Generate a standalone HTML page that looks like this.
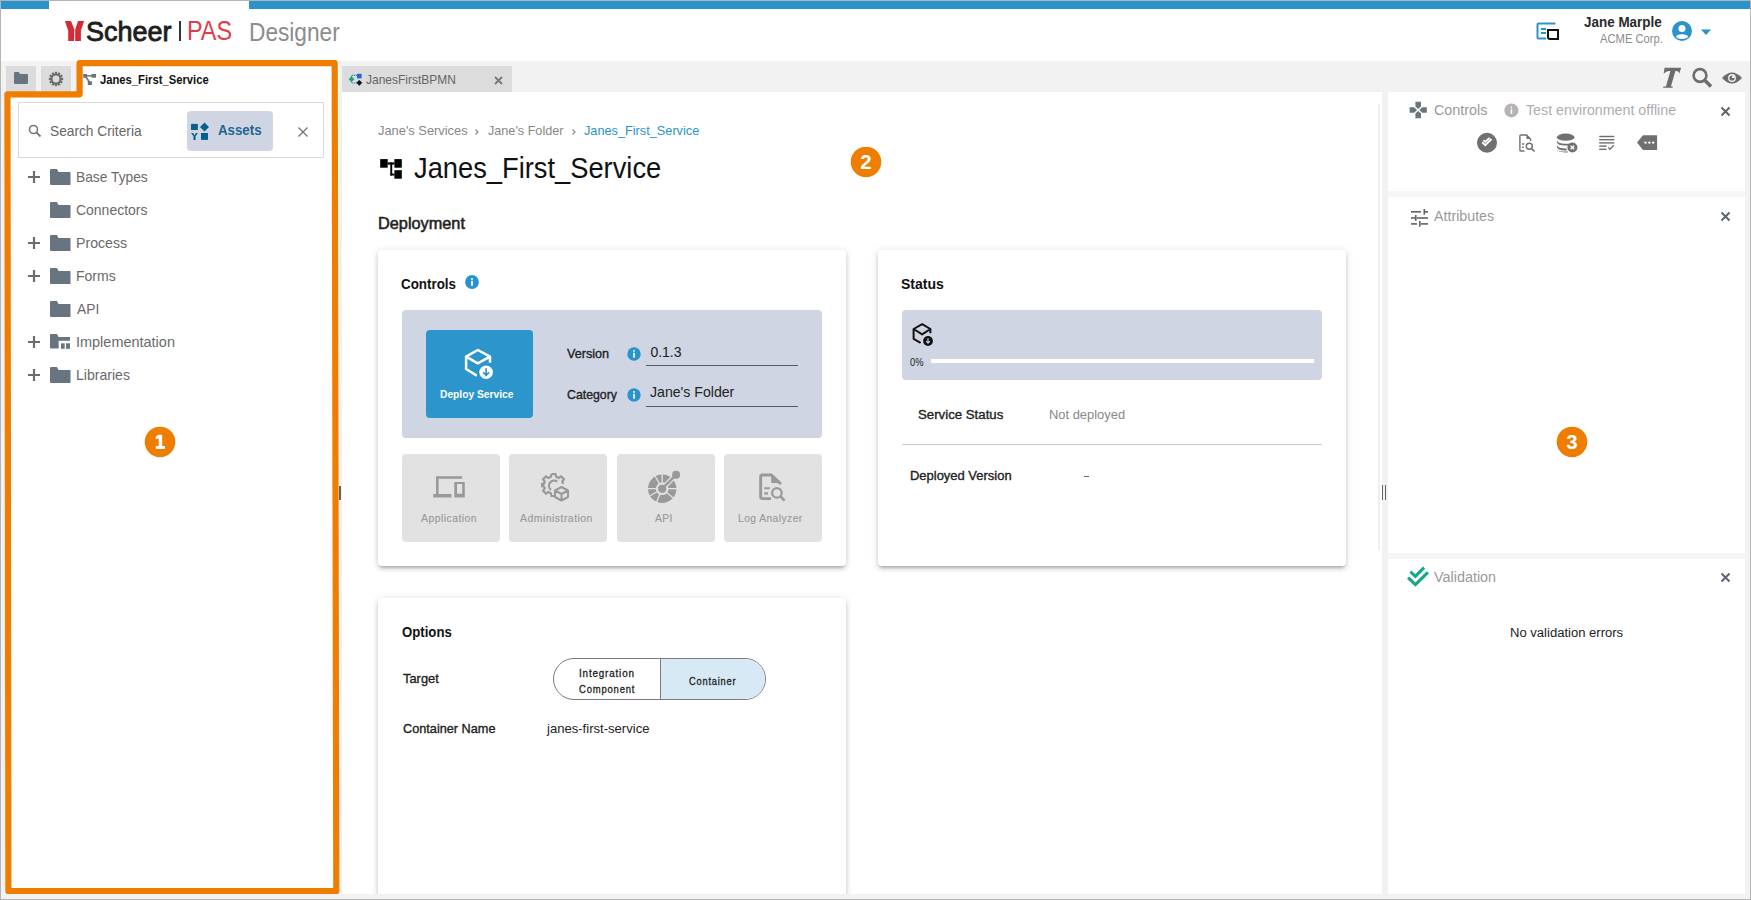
<!DOCTYPE html>
<html><head><meta charset="utf-8">
<style>
*{box-sizing:border-box;margin:0;padding:0}
html,body{width:1751px;height:900px;overflow:hidden;background:#fff;font-family:"Liberation Sans",sans-serif;color:#222}
.a{position:absolute}
.t{position:absolute;white-space:nowrap;line-height:1}
.card{background:#fff;border-radius:4px;box-shadow:0 3px 3px -2px rgba(0,0,0,.2),0 3px 4px 0 rgba(0,0,0,.14),0 1px 8px 0 rgba(0,0,0,.12)}
.tile{background:#e2e2e2;border-radius:4px}
</style></head><body>
<!-- tab bar -->
<div class="a" style="left:1px;top:61px;width:1749px;height:31px;background:#f2f2f2"></div>
<div class="a" style="left:6px;top:66px;width:30px;height:26px;background:#dcdcdc"></div>
<div class="a" style="left:41px;top:66px;width:30px;height:26px;background:#dcdcdc"></div>
<div class="a" style="left:77px;top:61px;width:262px;height:31px;background:#fff"></div>
<div class="a" style="left:342px;top:66px;width:170px;height:26px;background:#dcdcdc"></div>

<!-- splitters -->
<div class="a" style="left:1px;top:92px;width:4px;height:802px;background:#f1f2f3"></div>
<div class="a" style="left:339px;top:92px;width:3px;height:802px;background:#f0f1f3"></div>
<div class="a" style="left:1382px;top:92px;width:6px;height:802px;background:#f2f2f2"></div>
<div class="a" style="left:1745px;top:92px;width:5px;height:802px;background:#f2f2f2"></div>


<!-- header logo -->
<svg class="a" style="left:60px;top:15px" width="30" height="30" viewBox="0 0 30 30">
<path fill="#d52b35" d="M4.9 6 L11 6 L14.4 14.4 L14.1 25.9 L8.2 25.9 L8.2 15.8 Z M18 6 L24.1 6 L20.9 15.8 L20.9 25.9 L15.2 25.9 L15.2 14.4 Z"/>
</svg>
<div class="a" style="left:178.7px;top:21px;width:2px;height:20px;background:#333"></div>

<!-- header right -->
<svg class="a" style="left:1536px;top:22px" width="25" height="20" viewBox="0 0 25 20">
<path d="M19.5 1.5 H2.5 Q1.5 1.5 1.5 2.5 V15.5 Q1.5 16.5 2.5 16.5 H10" fill="none" stroke="#2a93cb" stroke-width="2"/>
<rect x="5" y="6" width="5" height="2" fill="#2a93cb"/><rect x="5" y="10" width="5" height="2" fill="#2a93cb"/>
<path d="M12 8 H22 V17 H14 Q12 17 12 15 Z" fill="none" stroke="#111" stroke-width="2"/><path d="M21 16 L23 18.5 L23 15 Z" fill="#111"/>
</svg>
<svg class="a" style="left:1671px;top:20px" width="22" height="22" viewBox="0 0 22 22">
<circle cx="11" cy="11" r="10" fill="#2a93cb"/>
<circle cx="11" cy="8.4" r="3.5" fill="#fff"/>
<ellipse cx="11" cy="16.6" rx="6" ry="2.4" fill="#fff"/>
</svg>
<svg class="a" style="left:1700px;top:28.5px" width="12" height="7" viewBox="0 0 12 7"><path d="M1 0.5 H11 L6 6 Z" fill="#2a93cb"/></svg>

<!-- tab bar content -->
<svg class="a" style="left:13px;top:71px" width="16" height="14" viewBox="0 0 16 14">
<path d="M1 2 Q1 1 2 1 H5.5 L7.5 3 H14 Q15 3 15 4 V12 Q15 13 14 13 H2 Q1 13 1 12 Z" fill="#687480"/>
</svg>
<svg class="a" style="left:48px;top:71px" width="16" height="16" viewBox="0 0 16 16">
<g fill="#6b6e6b" transform="translate(8 8)">
<circle r="5.6"/>
<rect x="-1.1" y="-7.2" width="2.2" height="14.4"/>
<rect x="-1.1" y="-7.2" width="2.2" height="14.4" transform="rotate(30)"/>
<rect x="-1.1" y="-7.2" width="2.2" height="14.4" transform="rotate(60)"/>
<rect x="-1.1" y="-7.2" width="2.2" height="14.4" transform="rotate(90)"/>
<rect x="-1.1" y="-7.2" width="2.2" height="14.4" transform="rotate(120)"/>
<rect x="-1.1" y="-7.2" width="2.2" height="14.4" transform="rotate(150)"/>
</g><circle cx="8" cy="8" r="3.4" fill="#dcdcdc"/>
</svg>
<svg class="a" style="left:82px;top:72px" width="16" height="15" viewBox="0 0 16 15">
<g fill="#687480"><rect x="1.2" y="2" width="3.7" height="3.7"/><rect x="9.5" y="2" width="4.5" height="3.7"/><rect x="5.8" y="9.3" width="4.2" height="3.7"/>
<rect x="4" y="3.1" width="6" height="1.5"/></g><path d="M3.6 4.6 L7.6 10.3" stroke="#687480" stroke-width="1.7"/></svg>
<svg class="a" style="left:348px;top:72px" width="16" height="14" viewBox="0 0 16 14">
<path d="M3.5 5 V3.4 H9 M3.5 9.5 V11 H9" fill="none" stroke="#3a7ee0" stroke-width="1.1" stroke-dasharray="1.3 0.7"/>
<path d="M0.6 7.2 L3.5 4.3 L6.4 7.2 L3.5 10.1 Z" fill="#1aa67a"/>
<rect x="9" y="1.8" width="4.6" height="4.6" fill="#2b63d9"/>
<path d="M11.3 8.2 L13.9 10.8 L11.3 13.4 L8.7 10.8 Z" fill="#111" stroke="#111" stroke-width="0.6" stroke-linejoin="round"/>
</svg>
<svg class="a" style="left:494px;top:76px" width="9" height="9" viewBox="0 0 9 9"><path d="M1 1 L8 8 M8 1 L1 8" stroke="#777" stroke-width="1.8"/></svg>

<svg class="a" style="left:1660px;top:64px" width="24" height="26" viewBox="0 0 24 26"><path d="M4.5 3.75 H21.1 L19.4 9.6 Q19 6.9 16.6 6.9 H15.4 L10.9 22.4 H12.9 L12.5 23.8 H3 L3.4 22.4 H5.9 L10.4 6.9 H9.6 Q5.8 6.9 3.7 9.9 Z" fill="#6b6e6b"/></svg>
<svg class="a" style="left:1690px;top:66px" width="24" height="24" viewBox="0 0 24 24">
<circle cx="10" cy="9.5" r="6.4" fill="none" stroke="#6b6e6b" stroke-width="2.6"/>
<path d="M14.5 14 L21 20.5" stroke="#6b6e6b" stroke-width="3.6"/>
</svg>
<svg class="a" style="left:1721px;top:71px" width="22" height="14" viewBox="0 0 22 14">
<path d="M1 7 Q11 -4 21 7 Q11 18 1 7 Z" fill="#6b6e6b"/>
<circle cx="11" cy="7" r="3.9" fill="#f2f2f2"/><circle cx="11" cy="7" r="2.6" fill="#6b6e6b"/>
<path d="M11 7 V4.4 A2.6 2.6 0 0 1 13.6 7 Z" fill="#f2f2f2"/>
</svg>


<!-- left panel -->
<div class="a" style="left:18px;top:102px;width:306px;height:56px;border:1px solid #d9d9d9;background:#fff"></div>
<svg class="a" style="left:28px;top:124px" width="14" height="14" viewBox="0 0 14 14"><circle cx="5.5" cy="5.5" r="4" fill="none" stroke="#777" stroke-width="1.6"/><path d="M8.5 8.5 L12.5 12.5" stroke="#777" stroke-width="1.8"/></svg>
<div class="a" style="left:187px;top:111px;width:86px;height:40px;background:#d0d5e3;border-radius:4px"></div>
<svg class="a" style="left:190px;top:122px" width="20" height="19" viewBox="0 0 20 19"><g fill="#075f8f">
<rect x="1" y="1.9" width="6.9" height="6.1"/><path d="M14.5 0.5 L19 5 L14.5 9.5 L10 5 Z"/><rect x="11" y="11" width="7" height="6.9"/>
<path d="M1 11 H3.2 L4.5 13.5 L5.8 11 H8 L5.6 14.2 V18 H3.5 V14.2 Z"/></g></svg>
<svg class="a" style="left:298px;top:127px" width="10" height="10" viewBox="0 0 10 10"><path d="M0.5 0.5 L9.5 9.5 M9.5 0.5 L0.5 9.5" stroke="#777" stroke-width="1.4"/></svg>
<svg class="a" style="left:28px;top:171px" width="12" height="12" viewBox="0 0 12 12"><path d="M0 6 H12 M6 0 V12" stroke="#6b6e6b" stroke-width="2.2"/></svg>
<svg class="a" style="left:50px;top:169px" width="21" height="17" viewBox="0 0 21 17"><path d="M0 1 Q0 0 1 0 H7 L8.5 3 H20 Q20.5 3 20.5 3.5 V15.5 Q20.5 16 20 16 H1 Q0 16 0 15 Z" fill="#687480"/></svg>
<svg class="a" style="left:50px;top:202px" width="21" height="17" viewBox="0 0 21 17"><path d="M0 1 Q0 0 1 0 H7 L8.5 3 H20 Q20.5 3 20.5 3.5 V15.5 Q20.5 16 20 16 H1 Q0 16 0 15 Z" fill="#687480"/></svg>
<svg class="a" style="left:28px;top:237px" width="12" height="12" viewBox="0 0 12 12"><path d="M0 6 H12 M6 0 V12" stroke="#6b6e6b" stroke-width="2.2"/></svg>
<svg class="a" style="left:50px;top:235px" width="21" height="17" viewBox="0 0 21 17"><path d="M0 1 Q0 0 1 0 H7 L8.5 3 H20 Q20.5 3 20.5 3.5 V15.5 Q20.5 16 20 16 H1 Q0 16 0 15 Z" fill="#687480"/></svg>
<svg class="a" style="left:28px;top:270px" width="12" height="12" viewBox="0 0 12 12"><path d="M0 6 H12 M6 0 V12" stroke="#6b6e6b" stroke-width="2.2"/></svg>
<svg class="a" style="left:50px;top:268px" width="21" height="17" viewBox="0 0 21 17"><path d="M0 1 Q0 0 1 0 H7 L8.5 3 H20 Q20.5 3 20.5 3.5 V15.5 Q20.5 16 20 16 H1 Q0 16 0 15 Z" fill="#687480"/></svg>
<svg class="a" style="left:50px;top:301px" width="21" height="17" viewBox="0 0 21 17"><path d="M0 1 Q0 0 1 0 H7 L8.5 3 H20 Q20.5 3 20.5 3.5 V15.5 Q20.5 16 20 16 H1 Q0 16 0 15 Z" fill="#687480"/></svg>
<svg class="a" style="left:28px;top:336px" width="12" height="12" viewBox="0 0 12 12"><path d="M0 6 H12 M6 0 V12" stroke="#6b6e6b" stroke-width="2.2"/></svg>
<svg class="a" style="left:50px;top:334px" width="21" height="17" viewBox="0 0 21 17"><path d="M0 1 Q0 0 1 0 H7 L8.5 3 H20 V6.8 H8.7 V14.4 H1 Q0 14.4 0 13.4 Z" fill="#687480"/><rect x="11" y="9.3" width="3.7" height="5.5" fill="#687480"/><rect x="16" y="9.3" width="4" height="5.5" fill="#687480"/></svg>
<svg class="a" style="left:28px;top:369px" width="12" height="12" viewBox="0 0 12 12"><path d="M0 6 H12 M6 0 V12" stroke="#6b6e6b" stroke-width="2.2"/></svg>
<svg class="a" style="left:50px;top:367px" width="21" height="17" viewBox="0 0 21 17"><path d="M0 1 Q0 0 1 0 H7 L8.5 3 H20 Q20.5 3 20.5 3.5 V15.5 Q20.5 16 20 16 H1 Q0 16 0 15 Z" fill="#687480"/></svg>
<div class="a" style="left:339px;top:486px;width:2px;height:14px;background:#5c6670"></div>

<!-- main content -->
<svg class="a" style="left:376px;top:154px" width="30" height="28" viewBox="0 0 30 28"><g fill="#000">
<rect x="4.2" y="5.1" width="7.5" height="8.6"/><rect x="18.4" y="5.1" width="7.4" height="8.6"/><rect x="18.4" y="16.2" width="7.4" height="8.5"/>
<rect x="11.7" y="8.4" width="6.7" height="2.2"/><rect x="14.3" y="8.4" width="1.9" height="13.1"/><rect x="14.3" y="19.6" width="4.1" height="1.9"/></g></svg>
<svg class="a" style="left:472px;top:127px" width="12" height="10" viewBox="0 0 12 10"><path d="M3.5 2.5 L6 5 L3.5 7.5" fill="none" stroke="#888" stroke-width="1.2"/></svg>
<svg class="a" style="left:569px;top:127px" width="12" height="10" viewBox="0 0 12 10"><path d="M3.5 2.5 L6 5 L3.5 7.5" fill="none" stroke="#888" stroke-width="1.2"/></svg>
<svg class="a" style="left:850px;top:147px" width="32" height="32" viewBox="0 0 32 32"><circle cx="16" cy="14.9" r="15.25" fill="#ee7d00"/><text x="16" y="22" text-anchor="middle" font-family="Liberation Sans" font-weight="bold" font-size="20.5" fill="#fff">2</text></svg>

<!-- cards -->
<div class="a card" style="left:378px;top:250px;width:468px;height:316px"></div>
<div class="a card" style="left:878px;top:250px;width:468px;height:316px"></div>
<div class="a card" style="left:378px;top:598px;width:468px;height:320px"></div>

<svg class="a" style="left:465px;top:275px" width="14" height="14" viewBox="0 0 14 14"><circle cx="7" cy="7" r="6.9" fill="#2a93cb"/><rect x="6.1" y="5.8" width="1.8" height="5" fill="#fff"/><circle cx="7" cy="3.9" r="1" fill="#fff"/></svg>
<div class="a" style="left:402px;top:310px;width:420px;height:128px;background:#d0d5e3;border-radius:4px"></div>
<div class="a" style="left:426px;top:330px;width:107px;height:88px;background:#2b95cc;border-radius:4px"></div>
<svg class="a" style="left:460px;top:345px" width="36" height="36" viewBox="0 0 36 36">
<path d="M16.7 30.6 L6.1 24 V11.7 L17.8 5 L30 11.7 V17.8 M6.1 11.7 L17.8 18.3 L30 11.7" fill="none" stroke="#fff" stroke-width="2.5" stroke-linejoin="round"/>
<circle cx="26.1" cy="27.2" r="7.6" fill="#2b95cc"/><circle cx="26.1" cy="27.2" r="6.8" fill="#fff"/><path d="M26.1 23.2 V30.2 M23.2 27.3 L26.1 30.3 L29 27.3" fill="none" stroke="#2b95cc" stroke-width="1.7"/>
</svg>
<svg class="a" style="left:627px;top:347px" width="14" height="14" viewBox="0 0 14 14"><circle cx="7" cy="7" r="6.7" fill="#2a93cb"/><rect x="6.15" y="5.8" width="1.7" height="4.8" fill="#fff"/><circle cx="7" cy="3.9" r="0.95" fill="#fff"/></svg>
<svg class="a" style="left:627px;top:388px" width="14" height="14" viewBox="0 0 14 14"><circle cx="7" cy="7" r="6.7" fill="#2a93cb"/><rect x="6.15" y="5.8" width="1.7" height="4.8" fill="#fff"/><circle cx="7" cy="3.9" r="0.95" fill="#fff"/></svg>
<div class="a" style="left:646px;top:365px;width:152px;height:1px;background:#5a5a5a"></div>
<div class="a" style="left:646px;top:406px;width:152px;height:1px;background:#5a5a5a"></div>

<div class="a tile" style="left:402px;top:454px;width:98px;height:88px"></div>
<div class="a tile" style="left:509px;top:454px;width:98px;height:88px"></div>
<div class="a tile" style="left:617px;top:454px;width:98px;height:88px"></div>
<div class="a tile" style="left:724px;top:454px;width:98px;height:88px"></div>
<svg class="a" style="left:432px;top:475px" width="34" height="24" viewBox="0 0 34 24"><g fill="#999">
<path d="M4.6 1.2 H30.2 V3.7 H6.6 V19 H19.5 V22.6 H1.2 V19 H4 V1.8 Z"/>
<path d="M23 6.9 H32.1 Q32.8 6.9 32.8 7.6 V21.9 Q32.8 22.6 32.1 22.6 H23 Q22.3 22.6 22.3 21.9 V7.6 Q22.3 6.9 23 6.9 Z M25 9 V18.8 H30.2 V9 Z"/></g></svg>
<svg class="a" style="left:541px;top:472px" width="30" height="30" viewBox="0 0 30 30">
<g transform="translate(12.5 13)" fill="none" stroke="#999" stroke-width="2.2">
<path d="M-2 -11 H2 L2.6 -8.2 L5.2 -7 L7.6 -8.6 L10.4 -5.8 L8.8 -3.4 L9.6 -1.2"/>
<path d="M-9.6 1.2 L-8.8 3.4 L-10.4 5.8 L-7.6 8.6 L-5.2 7 L-2.6 8.2 L-2 11 H1"/>
<path d="M-2 -11 L-2.6 -8.2 L-5.2 -7 L-7.6 -8.6 L-10.4 -5.8 L-8.8 -3.4 L-9.6 -1.2 L-12 -1.2 V1.2 L-9.6 1.2"/>
<path d="M-2.5 4.8 A5 5 0 0 1 3.8 -3.4" />
</g>
<path d="M20.5 15 L27 18.5 V25 L20.5 28.5 L14 25 V18.5 Z M14 18.5 L20.5 22 L27 18.5 M20.5 22 V28.5" fill="none" stroke="#999" stroke-width="2" stroke-linejoin="round"/>
</svg>
<svg class="a" style="left:644px;top:468px" width="40" height="38" viewBox="0 0 40 38">
<circle cx="18.2" cy="20.7" r="14.2" fill="#999"/>
<path d="M18.2 20.7 L2.20 20.70 M18.2 20.7 L34.20 20.70 M18.2 20.7 L18.20 4.70 M18.2 20.7 L10.44 6.71 M18.2 20.7 L4.40 28.80 M18.2 20.7 L11.95 35.43 M18.2 20.7 L30.46 30.98 " stroke="#e2e2e2" stroke-width="1.3" fill="none"/>
<circle cx="18.2" cy="20.7" r="5.2" fill="none" stroke="#e2e2e2" stroke-width="2.3"/>
<path d="M18.2 20.7 L32.1 6.8" stroke="#e2e2e2" stroke-width="5"/>
<path d="M18.2 20.7 L32.1 6.8" stroke="#999" stroke-width="2.4"/>
<circle cx="18.2" cy="20.7" r="4" fill="#999"/>
<circle cx="32.1" cy="6.8" r="4" fill="#999"/>
</svg>
<svg class="a" style="left:757px;top:472px" width="32" height="32" viewBox="0 0 32 32">
<path d="M14 26.65 H5.5 Q3.65 26.65 3.65 24.8 V4.9 Q3.65 3.05 5.5 3.05 H14.2 L23 11.2 V12.6" fill="none" stroke="#999" stroke-width="2.9"/>
<path d="M14.2 1.6 L23.6 10.6 L23.6 11 H14.2 Z" fill="#999"/>
<path d="M7.2 15.2 H13.2 L12.5 17.3 H7.2 Z" fill="#999"/><rect x="7.2" y="20.3" width="3.8" height="2.3" fill="#999"/>
<circle cx="19.9" cy="20.9" r="4.75" fill="none" stroke="#999" stroke-width="2.3"/><path d="M23.2 24.2 L27.6 28.6" stroke="#999" stroke-width="2.6"/>
</svg>

<!-- status card -->
<div class="a" style="left:902px;top:310px;width:420px;height:70px;background:#d0d5e3;border-radius:4px"></div>
<svg class="a" style="left:902px;top:315px" width="40" height="36" viewBox="0 0 40 36">
<path d="M18.6 27.8 L11.6 23.8 V14 L20.2 9.2 L28.4 14 V18.3 M11.6 14 L20.2 19.4 L28.4 14" fill="none" stroke="#111" stroke-width="2" stroke-linejoin="round"/>
<circle cx="26" cy="26" r="4.9" fill="#111"/><path d="M26 23.3 V28 M24.2 26.2 L26 28.1 L27.8 26.2" fill="none" stroke="#d0d5e3" stroke-width="1.1"/>
</svg>
<div class="a" style="left:931px;top:359px;width:383px;height:4px;background:#fff"></div>
<div class="a" style="left:902px;top:444px;width:420px;height:1px;background:#c8cad3"></div>
<div class="a" style="left:1084px;top:475.5px;width:5px;height:1.2px;background:#666"></div>

<!-- options -->
<div class="a" style="left:553px;top:658px;width:213px;height:42px;border:1px solid #7a7a80;border-radius:21px;overflow:hidden;background:#fff">
<div class="a" style="left:105.5px;top:0;width:108px;height:40px;background:#d6e9f5;border-left:1px solid #7a7a80"></div></div>

<!-- right panel -->
<div class="a" style="left:1378px;top:104px;width:2px;height:446px;background:#efefef"></div>
<div class="a" style="left:1388px;top:191px;width:357px;height:6px;background:#f6f6f6"></div>
<div class="a" style="left:1388px;top:553px;width:357px;height:6px;background:#f6f6f6"></div>
<div class="a" style="left:1382px;top:485px;width:4px;height:15px;border-left:1.3px solid #5c6670;border-right:1.3px solid #5c6670"></div>
<svg class="a" style="left:1409px;top:101px" width="19" height="18" viewBox="0 0 19 18"><g fill="#687480">
<path d="M6.4 0.8 H12 V5.6 L9.2 8.1 L6.4 5.6 Z"/><path d="M6.4 17.2 H12 V12.4 L9.2 9.9 L6.4 12.4 Z"/>
<path d="M0.6 6.3 V11.7 H5.2 L8 9 L5.2 6.3 Z"/><path d="M17.8 6.3 V11.7 H13.2 L10.4 9 L13.2 6.3 Z"/></g></svg>
<svg class="a" style="left:1504px;top:103px" width="15" height="15" viewBox="0 0 15 15"><circle cx="7.4" cy="7.4" r="7" fill="#b6b2b6"/><rect x="6.6" y="6.2" width="1.6" height="4.6" fill="#fff"/><circle cx="7.4" cy="4.3" r="0.9" fill="#fff"/></svg>
<svg class="a" style="left:1720px;top:106px" width="11" height="11" viewBox="0 0 11 11"><path d="M1.5 1.5 L9.5 9.5 M9.5 1.5 L1.5 9.5" stroke="#5a6570" stroke-width="2"/></svg>
<svg class="a" style="left:1720px;top:211px" width="11" height="11" viewBox="0 0 11 11"><path d="M1.5 1.5 L9.5 9.5 M9.5 1.5 L1.5 9.5" stroke="#5a6570" stroke-width="2"/></svg>
<svg class="a" style="left:1720px;top:572px" width="11" height="11" viewBox="0 0 11 11"><path d="M1.5 1.5 L9.5 9.5 M9.5 1.5 L1.5 9.5" stroke="#5a6570" stroke-width="2"/></svg>

<svg class="a" style="left:1476px;top:132px" width="22" height="22" viewBox="0 0 22 22"><circle cx="11" cy="10.8" r="10" fill="#6e716e"/>
<path d="M6.2 10.3 L9.3 13.2 L15.5 7" fill="none" stroke="#fff" stroke-width="2"/><path d="M7.5 8.2 L9.3 9.8 L13.5 5.8" fill="none" stroke="#fff" stroke-width="1.8"/></svg>
<svg class="a" style="left:1518px;top:134px" width="20" height="19" viewBox="0 0 20 19">
<path d="M6.5 17 H2.8 Q1.9 17 1.9 16.1 V1.9 Q1.9 1 2.8 1 H8.5 L12.5 5 V7" fill="none" stroke="#6e716e" stroke-width="1.4"/><path d="M8.5 1 V5 H12.5 Z" fill="#6e716e"/>
<rect x="4" y="9.3" width="2.4" height="1.4" fill="#6e716e"/><rect x="4" y="12.6" width="1.8" height="1.4" fill="#6e716e"/>
<circle cx="11.3" cy="12.3" r="3" fill="none" stroke="#6e716e" stroke-width="1.4"/><path d="M13.4 14.4 L16.5 17.5" stroke="#6e716e" stroke-width="1.6"/></svg>
<svg class="a" style="left:1556px;top:133px" width="23" height="21" viewBox="0 0 23 21"><g fill="#6e716e">
<ellipse cx="9.7" cy="4.2" rx="8.8" ry="3.6"/>
<path d="M0.9 6.8 Q0.9 10.8 9.7 10.8 Q12 10.8 13.5 10.5 L13 12.4 Q11.5 12.6 9.7 12.6 Q0.9 12.6 0.9 9 Z"/>
<path d="M0.9 11.6 Q0.9 15.6 9.7 15.6 L10.5 15.6 L10.8 17.4 L9.7 17.4 Q0.9 17.4 0.9 13.8 Z"/>
<path d="M0.9 16.2 Q0.9 19 9.7 19.4 L11.6 19.4 L12 18.5 Q0.9 18.8 0.9 16.2 Z"/>
<circle cx="16.4" cy="14.5" r="5"/></g>
<path d="M14.6 12.7 L18.2 16.3 M18.2 12.7 L14.6 16.3" stroke="#fff" stroke-width="1.3"/></svg>
<svg class="a" style="left:1598px;top:135px" width="18" height="17" viewBox="0 0 18 17"><g fill="#6e716e">
<rect x="1.2" y="0.8" width="15.2" height="1.4"/><rect x="1.2" y="4" width="15.2" height="1.4"/><rect x="1.2" y="7.2" width="15.2" height="1.4"/>
<rect x="1.2" y="10.4" width="7.4" height="1.4"/><rect x="1.2" y="13.6" width="7.4" height="1.4"/></g>
<path d="M10.2 12.4 L12 14.2 L15.8 10.3" fill="none" stroke="#6e716e" stroke-width="1.3"/></svg>
<svg class="a" style="left:1636px;top:134px" width="22" height="17" viewBox="0 0 22 17"><path d="M21.1 1.2 H7 L1 8.6 L7 15.9 H21.1 Z" fill="#6e716e"/>
<circle cx="9.5" cy="8.6" r="1.2" fill="#fff"/><circle cx="13.4" cy="8.6" r="1.2" fill="#fff"/><circle cx="17.2" cy="8.6" r="1.2" fill="#fff"/></svg>

<svg class="a" style="left:1410px;top:208px" width="19" height="19" viewBox="0 0 19 19"><g fill="#5f635f">
<rect x="1" y="3" width="10" height="1.6"/><rect x="13.5" y="1" width="1.6" height="5.7"/><rect x="15" y="3" width="3" height="1.6"/>
<rect x="1" y="9.2" width="4" height="1.6"/><rect x="5" y="7" width="1.6" height="5.8"/><rect x="7" y="9.2" width="11" height="1.6"/>
<rect x="1" y="15.1" width="6" height="1.6"/><rect x="9" y="13" width="1.6" height="5.7"/><rect x="11" y="15.1" width="7" height="1.6"/></g></svg>
<svg class="a" style="left:1400px;top:560px" width="32" height="30" viewBox="0 0 32 30">
<path d="M11.6 12.8 L15.4 16.4 L23 8.7 M9.2 18.6 L15.4 24.6 L26.8 13.4" fill="none" stroke="#14a88a" stroke-width="3.1" stroke-linecap="square"/></svg>

<!-- annotation numbers -->
<svg class="a" style="left:144px;top:426px" width="32" height="32" viewBox="0 0 32 32"><circle cx="16" cy="15.9" r="15.25" fill="#ee7d00"/>
<path d="M14.6 8.7 H18.2 V20.1 H21 V23 H11.8 V20.1 H14.7 V12.3 L11.8 13.3 V10.5 Z" fill="#fff"/></svg>
<svg class="a" style="left:1556px;top:426px" width="32" height="32" viewBox="0 0 32 32"><circle cx="16" cy="15.9" r="15.25" fill="#ee7d00"/><text x="16" y="23" text-anchor="middle" font-family="Liberation Sans" font-weight="bold" font-size="20.5" fill="#fff">3</text></svg>

<div class="t" id="sch" style="left:85.75px;top:17.2px;font-size:28.5px;color:#1e1e1e;transform:scaleX(0.9472);transform-origin:0 0;-webkit-text-stroke:0.9px currentColor;">Scheer</div>
<div class="t" id="pas" style="left:186.86px;top:16.2px;font-size:28.5px;color:#db4049;transform:scaleX(0.8212);transform-origin:0 0;">PAS</div>
<div class="t" id="des" style="left:248.89px;top:19.7px;font-size:25.0px;color:#8c8c8c;transform:scaleX(0.9071);transform-origin:0 0;">Designer</div>
<div class="t" id="jm" style="left:1584.0px;top:15.0px;font-size:14.0px;color:#2a2a2a;font-weight:bold;transform:scaleX(0.9605);transform-origin:0 0;">Jane Marple</div>
<div class="t" id="acme" style="left:1600.0px;top:33.4px;font-size:12.0px;color:#8a8a8a;transform:scaleX(0.9333);transform-origin:0 0;">ACME Corp.</div>
<div class="t" id="tab1" style="left:100.0px;top:73.0px;font-size:13.0px;color:#111;font-weight:bold;transform:scaleX(0.864);transform-origin:0 0;">Janes_First_Service</div>
<div class="t" id="tab2" style="left:366.2px;top:72.8px;font-size:13.0px;color:#666;transform:scaleX(0.9216);transform-origin:0 0;">JanesFirstBPMN</div>
<div class="t" id="srch" style="left:50.35px;top:124.0px;font-size:14.5px;color:#666;transform:scaleX(0.9469);transform-origin:0 0;">Search Criteria</div>
<div class="t" id="assets" style="left:217.7px;top:122.3px;font-size:15.5px;color:#1d6592;font-weight:bold;transform:scaleX(0.856);transform-origin:0 0;">Assets</div>
<div class="t" id="tr0" style="left:75.75px;top:169.9px;font-size:14.5px;color:#6a6a6a;transform:scaleX(0.95);transform-origin:0 0;">Base Types</div>
<div class="t" id="tr1" style="left:75.74px;top:202.9px;font-size:14.5px;color:#6a6a6a;transform:scaleX(0.963);transform-origin:0 0;">Connectors</div>
<div class="t" id="tr2" style="left:75.63px;top:235.9px;font-size:14.5px;color:#6a6a6a;transform:scaleX(0.9745);transform-origin:0 0;">Process</div>
<div class="t" id="tr3" style="left:75.63px;top:268.9px;font-size:14.5px;color:#6a6a6a;transform:scaleX(0.9675);transform-origin:0 0;">Forms</div>
<div class="t" id="tr4" style="left:76.6px;top:301.9px;font-size:14.5px;color:#6a6a6a;transform:scaleX(0.95);transform-origin:0 0;">API</div>
<div class="t" id="tr5" style="left:75.6px;top:334.9px;font-size:14.5px;color:#6a6a6a;transform:scaleX(0.9979);transform-origin:0 0;">Implementation</div>
<div class="t" id="tr6" style="left:75.63px;top:367.9px;font-size:14.5px;color:#6a6a6a;transform:scaleX(0.9704);transform-origin:0 0;">Libraries</div>
<div class="t" id="bc1" style="left:377.8px;top:124.2px;font-size:13.0px;color:#888;transform:scaleX(0.9889);transform-origin:0 0;">Jane's Services</div>
<div class="t" id="bc2" style="left:487.5px;top:124.2px;font-size:13.0px;color:#888;transform:scaleX(0.9718);transform-origin:0 0;">Jane's Folder</div>
<div class="t" id="bc3" style="left:583.7px;top:124.2px;font-size:13.0px;color:#2a93cb;transform:scaleX(0.9786);transform-origin:0 0;">Janes_First_Service</div>
<div class="t" id="title" style="left:413.76px;top:154.0px;font-size:29.0px;color:#111;transform:scaleX(0.941);transform-origin:0 0;">Janes_First_Service</div>
<div class="t" id="deploy" style="left:377.81px;top:214.6px;font-size:16.5px;color:#222;transform:scaleX(0.9874);transform-origin:0 0;-webkit-text-stroke:0.55px currentColor;">Deployment</div>
<div class="t" id="ctl" style="left:401.41px;top:275.6px;font-size:15.0px;color:#111;font-weight:bold;transform:scaleX(0.8917);transform-origin:0 0;">Controls</div>
<div class="t" id="depsvc" style="left:440.07px;top:390.0px;font-size:10.0px;color:#fff;font-weight:bold;transform:scaleX(1.0254);transform-origin:0 0;">Deploy Service</div>
<div class="t" id="ver" style="left:567.4px;top:347.1px;font-size:13.0px;color:#222;transform:scaleX(0.9721);transform-origin:0 0;-webkit-text-stroke:0.35px currentColor;">Version</div>
<div class="t" id="verv" style="left:650.4px;top:344.6px;font-size:14.0px;color:#222;">0.1.3</div>
<div class="t" id="cat" style="left:567.4px;top:388.0px;font-size:13.0px;color:#222;transform:scaleX(0.9472);transform-origin:0 0;-webkit-text-stroke:0.35px currentColor;">Category</div>
<div class="t" id="catv" style="left:650.4px;top:385.0px;font-size:14.5px;color:#222;transform:scaleX(0.9736);transform-origin:0 0;">Jane's Folder</div>
<div class="t" id="t1" style="left:421.1px;top:514.0px;font-size:10.0px;color:#9a9a9a;transform:scaleX(1.0415);transform-origin:0 0;-webkit-text-stroke:0.15px currentColor;letter-spacing:0.45px;">Application</div>
<div class="t" id="t2" style="left:520.0px;top:514.0px;font-size:10.0px;color:#9a9a9a;transform:scaleX(1.0464);transform-origin:0 0;-webkit-text-stroke:0.15px currentColor;letter-spacing:0.45px;">Administration</div>
<div class="t" id="t3" style="left:655.3px;top:514.0px;font-size:10.0px;color:#9a9a9a;transform:scaleX(1.025);transform-origin:0 0;-webkit-text-stroke:0.15px currentColor;letter-spacing:0.45px;">API</div>
<div class="t" id="t4" style="left:737.88px;top:514.0px;font-size:10.0px;color:#9a9a9a;transform:scaleX(1.0226);transform-origin:0 0;-webkit-text-stroke:0.15px currentColor;letter-spacing:0.45px;">Log Analyzer</div>
<div class="t" id="status" style="left:901.07px;top:275.6px;font-size:15.0px;color:#111;font-weight:bold;transform:scaleX(0.9341);transform-origin:0 0;">Status</div>
<div class="t" id="pct" style="left:910.0px;top:358.0px;font-size:10.0px;color:#222;transform:scaleX(0.9286);transform-origin:0 0;">0%</div>
<div class="t" id="ss" style="left:917.84px;top:409.3px;font-size:12.5px;color:#222;transform:scaleX(1.0582);transform-origin:0 0;-webkit-text-stroke:0.35px currentColor;">Service Status</div>
<div class="t" id="nd" style="left:1048.67px;top:409.3px;font-size:12.5px;color:#888;transform:scaleX(1.0333);transform-origin:0 0;">Not deployed</div>
<div class="t" id="dv" style="left:909.66px;top:470.3px;font-size:12.5px;color:#222;transform:scaleX(1.0371);transform-origin:0 0;-webkit-text-stroke:0.35px currentColor;">Deployed Version</div>
<div class="t" id="opt" style="left:401.82px;top:624.0px;font-size:15.0px;color:#111;font-weight:bold;transform:scaleX(0.8782);transform-origin:0 0;">Options</div>
<div class="t" id="tgt" style="left:402.7px;top:671.9px;font-size:13.5px;color:#222;transform:scaleX(0.9553);transform-origin:0 0;-webkit-text-stroke:0.35px currentColor;">Target</div>
<div class="t" id="ig1" style="left:578.76px;top:667.8px;font-size:10.5px;color:#222;transform:scaleX(0.9368);transform-origin:0 0;-webkit-text-stroke:0.3px currentColor;letter-spacing:0.9px;">Integration</div>
<div class="t" id="ig2" style="left:578.8px;top:684.3px;font-size:10.5px;color:#222;transform:scaleX(0.9016);transform-origin:0 0;-webkit-text-stroke:0.3px currentColor;letter-spacing:0.9px;">Component</div>
<div class="t" id="cont" style="left:689.0px;top:676.2px;font-size:10.5px;color:#222;transform:scaleX(0.883);transform-origin:0 0;-webkit-text-stroke:0.3px currentColor;letter-spacing:0.9px;">Container</div>
<div class="t" id="cn" style="left:402.7px;top:722.4px;font-size:13.0px;color:#222;transform:scaleX(0.9768);transform-origin:0 0;-webkit-text-stroke:0.35px currentColor;">Container Name</div>
<div class="t" id="cnv" style="left:547.4px;top:722.4px;font-size:13.0px;color:#222;transform:scaleX(1.0059);transform-origin:0 0;">janes-first-service</div>
<div class="t" id="rctl" style="left:1433.64px;top:101.8px;font-size:15.0px;color:#999;transform:scaleX(0.9556);transform-origin:0 0;">Controls</div>
<div class="t" id="test" style="left:1526.0px;top:102.9px;font-size:14.5px;color:#b0acb0;transform:scaleX(0.9816);transform-origin:0 0;">Test environment offline</div>
<div class="t" id="attr" style="left:1434.2px;top:209.0px;font-size:14.0px;color:#999;transform:scaleX(1.0169);transform-origin:0 0;">Attributes</div>
<div class="t" id="valid" style="left:1434.2px;top:569.9px;font-size:14.0px;color:#999;transform:scaleX(1.0267);transform-origin:0 0;">Validation</div>
<div class="t" id="noval" style="left:1509.66px;top:627.2px;font-size:12.5px;color:#222;transform:scaleX(1.0439);transform-origin:0 0;">No validation errors</div>
<!-- orange annotation outline -->
<svg class="a" style="left:0;top:0" width="1751" height="900">
<path d="M8.4 891.2 L7.45 94.3 L79.6 94.3 L79.6 63.2 L334.7 63.2 L336.3 891.2 Z" fill="none" stroke="#ee7d00" stroke-width="6.2" stroke-linejoin="round"/>
</svg>
<!-- bottom band -->
<div class="a" style="left:1px;top:894px;width:1749px;height:5px;background:#f2f2f2"></div>
<!-- frame -->
<div class="a" style="left:0;top:0;width:1751px;height:1px;background:#b4b4b4"></div>
<div class="a" style="left:0;top:0;width:1px;height:900px;background:#b4b4b4"></div>
<div class="a" style="left:1750px;top:0;width:1px;height:900px;background:#b4b4b4"></div>
<div class="a" style="left:0;top:899px;width:1751px;height:1px;background:#b4b4b4"></div>
<!-- blue bar -->
<div class="a" style="left:1px;top:1px;width:48px;height:8px;background:#2a93cb"></div>
<div class="a" style="left:249px;top:1px;width:1501px;height:8px;background:#2a93cb"></div>

</body></html>
